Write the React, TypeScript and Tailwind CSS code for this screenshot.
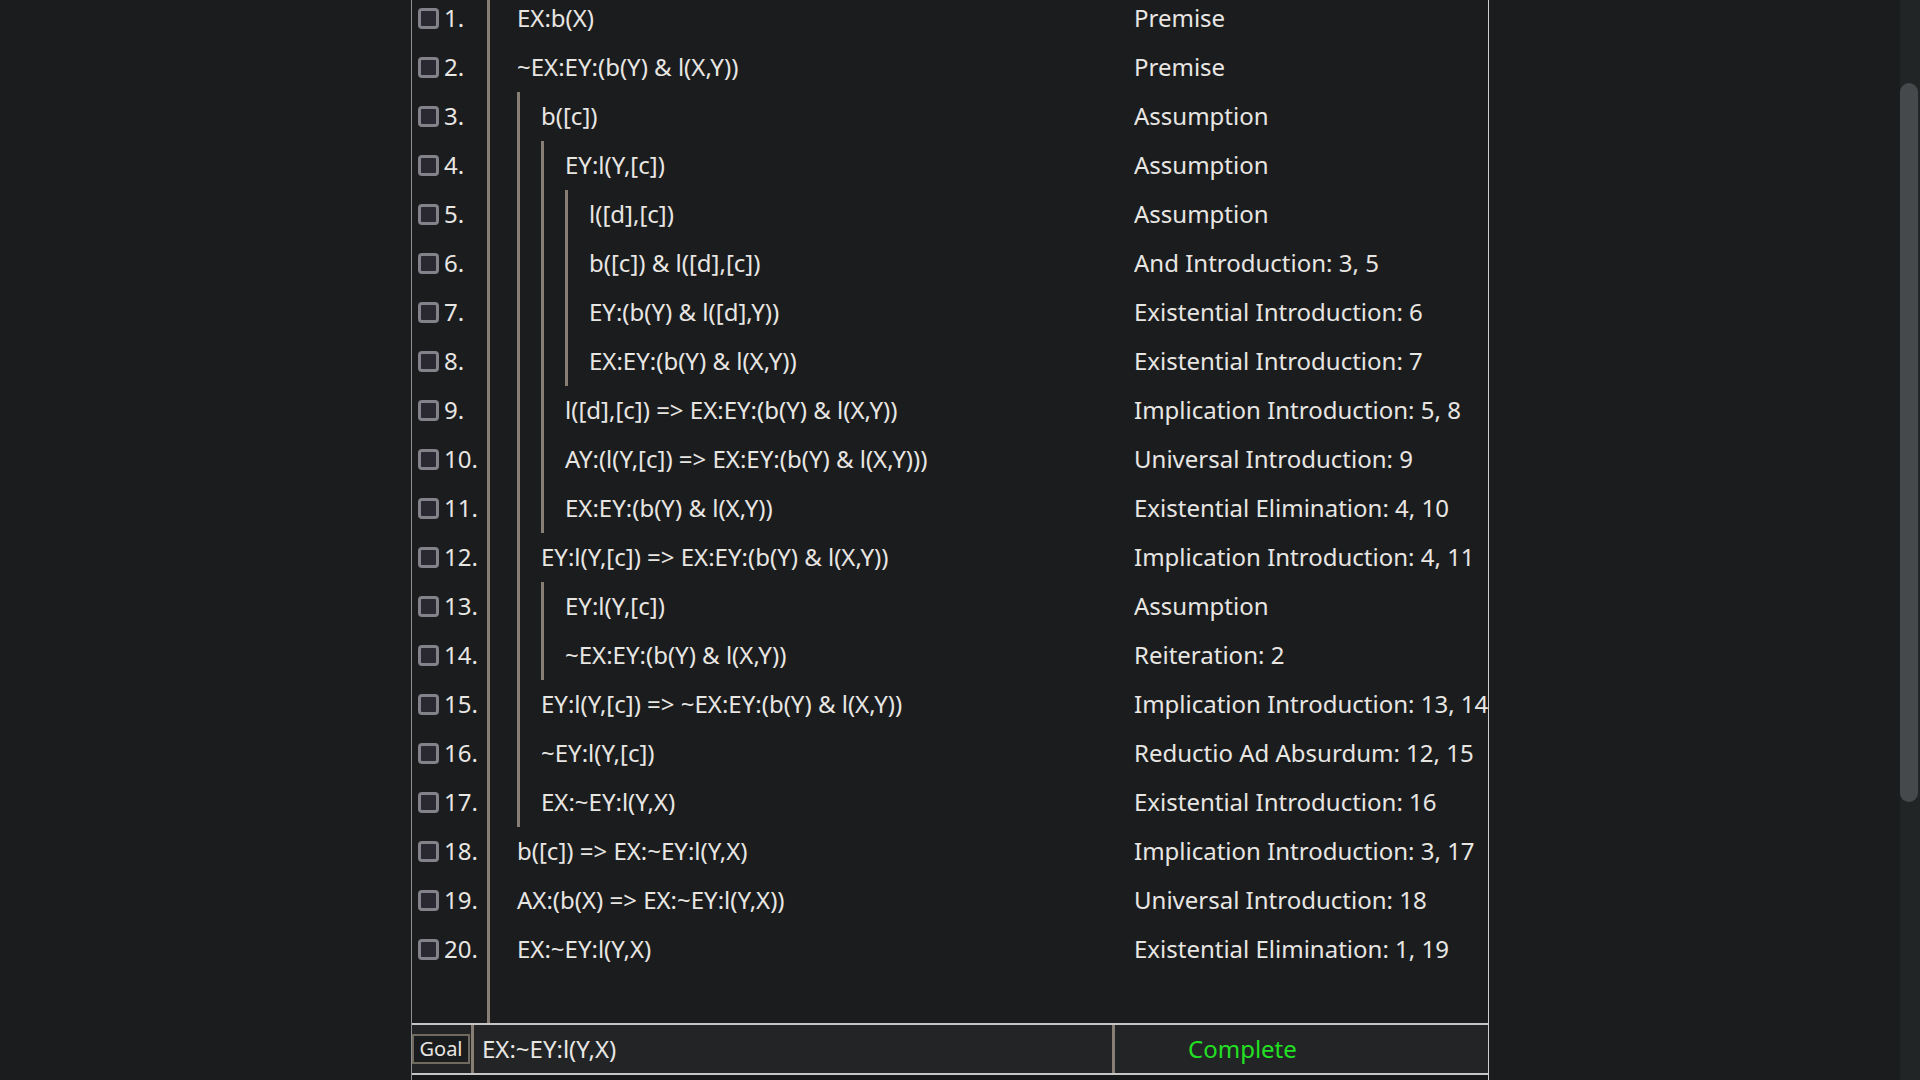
import React from "react";

type Line = { f: string; j: string; d: number };

const lines: Line[] = [
  { f: "EX:b(X)", j: "Premise", d: 0 },
  { f: "~EX:EY:(b(Y) & l(X,Y))", j: "Premise", d: 0 },
  { f: "b([c])", j: "Assumption", d: 1 },
  { f: "EY:l(Y,[c])", j: "Assumption", d: 2 },
  { f: "l([d],[c])", j: "Assumption", d: 3 },
  { f: "b([c]) & l([d],[c])", j: "And Introduction: 3, 5", d: 3 },
  { f: "EY:(b(Y) & l([d],Y))", j: "Existential Introduction: 6", d: 3 },
  { f: "EX:EY:(b(Y) & l(X,Y))", j: "Existential Introduction: 7", d: 3 },
  { f: "l([d],[c]) => EX:EY:(b(Y) & l(X,Y))", j: "Implication Introduction: 5, 8", d: 2 },
  { f: "AY:(l(Y,[c]) => EX:EY:(b(Y) & l(X,Y)))", j: "Universal Introduction: 9", d: 2 },
  { f: "EX:EY:(b(Y) & l(X,Y))", j: "Existential Elimination: 4, 10", d: 2 },
  { f: "EY:l(Y,[c]) => EX:EY:(b(Y) & l(X,Y))", j: "Implication Introduction: 4, 11", d: 1 },
  { f: "EY:l(Y,[c])", j: "Assumption", d: 2 },
  { f: "~EX:EY:(b(Y) & l(X,Y))", j: "Reiteration: 2", d: 2 },
  { f: "EY:l(Y,[c]) => ~EX:EY:(b(Y) & l(X,Y))", j: "Implication Introduction: 13, 14", d: 1 },
  { f: "~EY:l(Y,[c])", j: "Reductio Ad Absurdum: 12, 15", d: 1 },
  { f: "EX:~EY:l(Y,X)", j: "Existential Introduction: 16", d: 1 },
  { f: "b([c]) => EX:~EY:l(Y,X)", j: "Implication Introduction: 3, 17", d: 0 },
  { f: "AX:(b(X) => EX:~EY:l(Y,X))", j: "Universal Introduction: 18", d: 0 },
  { f: "EX:~EY:l(Y,X)", j: "Existential Elimination: 1, 19", d: 0 },
];

function Nested({ depth, children }: { depth: number; children: React.ReactNode }) {
  if (depth <= 0) {
    return <div className="flex h-full items-center whitespace-nowrap pb-[2px]">{children}</div>;
  }
  return (
    <div className="flex h-full border-l-[3px] border-[#877f73] pl-[21px]">
      <Nested depth={depth - 1}>{children}</Nested>
    </div>
  );
}

function Row({ n, line }: { n: number; line: Line }) {
  return (
    <div className="flex h-[49px] shrink-0">
      <div className="flex h-full w-[75px] shrink-0 items-center pl-[6px]">
        <div className="h-[21px] w-[21px] shrink-0 rounded-[4px] border-[3px] border-[#838189] bg-[#2a2931]" />
        <span className="ml-[5px] pb-[2px]">{n}.</span>
      </div>
      <div className="flex h-full w-[647px] shrink-0 border-l-[3px] border-[#877f73] pl-[27px]">
        <Nested depth={line.d}>{line.f}</Nested>
      </div>
      <div className="flex h-full min-w-0 flex-1 items-center overflow-hidden whitespace-nowrap pb-[2px]">
        {line.j}
      </div>
    </div>
  );
}

export default function App() {
  return (
    <div
      className="flex h-screen w-full overflow-hidden bg-[#1b1c1e] text-[24px] leading-none text-[#e8e6e3]"
      style={{ fontFamily: '"Noto Sans", "Open Sans", sans-serif' }}
    >
      <div className="w-[411px] shrink-0" />
      <div className="flex h-full w-[1078px] shrink-0 flex-col border-l border-r border-l-[#8f8f8f] border-r-[#cfcfcf]">
        <div className="flex min-h-0 flex-1 flex-col overflow-hidden">
          <div className="mt-[-6px] flex shrink-0 flex-col">
            {lines.map((l, i) => (
              <Row key={i} n={i + 1} line={l} />
            ))}
          </div>
          <div className="ml-[75px] flex-1 border-l-[3px] border-[#877f73]" />
        </div>
        <div className="flex h-[52px] shrink-0 items-stretch border-y-2 border-[#c6c6c6] bg-[#222426]">
          <div className="flex w-[59px] shrink-0 items-center">
            <div className="flex h-[30px] w-[58px] items-center justify-center border-2 border-[#6f695e] bg-[#1b1c1e] text-[20px]">
              Goal
            </div>
          </div>
          <div className="flex w-[641px] shrink-0 items-center border-l-[3px] border-[#877f73] pl-[8px] whitespace-nowrap">
            EX:~EY:l(Y,X)
          </div>
          <div className="flex flex-1 items-center border-l-[3px] border-[#877f73] pl-[73px] text-[#22e022]">
            Complete
          </div>
        </div>
        <div className="h-[5px] shrink-0 bg-[#161718]" />
      </div>
      <div className="flex-1" />
      <div className="relative h-full w-[20px] shrink-0 bg-[#222526]">
        <div className="absolute left-0 top-[83px] h-[719px] w-[18px] rounded-full bg-[#45494c]" />
      </div>
    </div>
  );
}
